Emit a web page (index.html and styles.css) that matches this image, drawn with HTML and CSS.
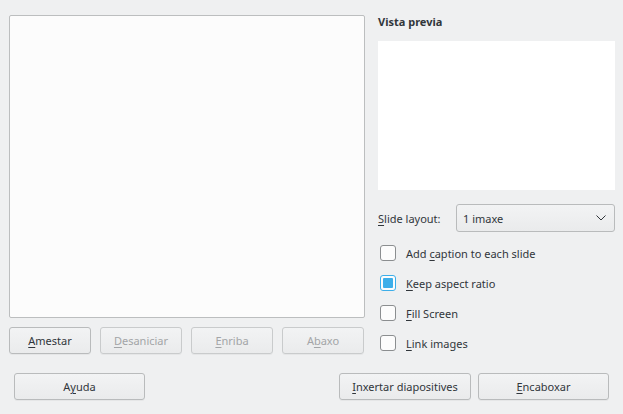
FILE: index.html
```html
<!DOCTYPE html>
<html>
<head>
<meta charset="utf-8">
<link rel="stylesheet" href="styles.css">
</head>
<body>
<div class="dialog">
  <div class="main">
    <div class="left">
      <div class="list"></div>
      <div class="list-buttons">
        <button class="btn small"><u>A</u>mestar</button>
        <button class="btn small disabled"><u>D</u>esaniciar</button>
        <button class="btn small disabled"><u>E</u>nriba</button>
        <button class="btn small disabled">A<u>b</u>axo</button>
      </div>
    </div>
    <div class="right">
      <div class="title">Vista previa</div>
      <div class="preview"></div>
      <div class="layout-row">
        <span class="label"><u>S</u>lide layout:</span>
        <div class="combo">
          <span>1 imaxe</span>
          <svg class="chev" width="10" height="6" viewBox="0 0 10 6"><path d="M0.5 0.5 L5 5 L9.5 0.5" fill="none" stroke="#31363b" stroke-width="1"/></svg>
        </div>
      </div>
      <div class="checks">
        <div class="check"><span class="box"></span><span>Add <u>c</u>aption to each slide</span></div>
        <div class="check"><span class="box on"><span class="fill"></span></span><span><u>K</u>eep aspect ratio</span></div>
        <div class="check"><span class="box"></span><span><u>F</u>ill Screen</span></div>
        <div class="check"><span class="box"></span><span><u>L</u>ink images</span></div>
      </div>
    </div>
  </div>
  <div class="footer">
    <button class="btn wide">A<u>y</u>uda</button>
    <div class="spacer"></div>
    <button class="btn wide"><u>I</u>nxertar diapositives</button>
    <button class="btn wide"><u>E</u>ncaboxar</button>
  </div>
</div>
</body>
</html>
```
FILE: styles.css
```css
html, body {
  margin: 0;
  padding: 0;
  background: #eff0f1;
}
body {
  width: 623px;
  height: 414px;
  overflow: hidden;
  font-family: "Noto Sans", "DejaVu Sans", sans-serif;
  font-size: 11px;
  color: #31363b;
}
u {
  text-decoration: underline;
  text-underline-offset: 2px;
}
.dialog {
  display: flex;
  flex-direction: column;
}
.main {
  display: flex;
  align-items: flex-start;
  height: 339px;
  padding: 15px 0 0 9px;
}
.left {
  width: 356px;
  display: flex;
  flex-direction: column;
}
.list {
  height: 301px;
  background: #fcfcfc;
  border: 1px solid #bcbebf;
  border-radius: 2px;
}
.list-buttons {
  display: flex;
  gap: 9px;
  margin-top: 9px;
}
.btn {
  font-family: inherit;
  font-size: 11px;
  color: #31363b;
  background: linear-gradient(#f2f3f4, #eaebec);
  border: 1px solid #b9bbbc;
  border-radius: 3px;
  padding: 0;
  box-shadow: 0 1px 0 rgba(0,0,0,0.04);
}
.btn.small {
  width: 82px;
  height: 27px;
}
.btn.disabled {
  color: #a3a5a7;
  border-color: #c9cbcc;
}
.right {
  margin-left: 13px;
  width: 237px;
  display: flex;
  flex-direction: column;
}
.title {
  font-weight: bold;
  height: 26px;
  line-height: 14px;
  padding-top: 0px;
}
.preview {
  height: 149px;
  background: #ffffff;
}
.layout-row {
  display: flex;
  align-items: center;
  margin-top: 14px;
}
.label {
  width: 78px;
}
.combo {
  height: 26px;
  border: 1px solid #b9bbbc;
  border-radius: 3px;
  background: linear-gradient(#f2f3f4, #eaebec);
  display: flex;
  align-items: center;
  justify-content: space-between;
  padding: 0 8px 0 6px;
  box-sizing: content-box;
  width: 143px;
}
.chev {
  display: block;
}
.checks {
  display: flex;
  flex-direction: column;
  margin-top: 6px;
}
.check {
  display: flex;
  align-items: center;
  height: 30px;
}
.box {
  width: 14px;
  height: 14px;
  border: 1px solid #8b8e90;
  border-radius: 3px;
  background: #fcfcfc;
  margin-left: 2px;
  margin-right: 10px;
  display: flex;
  align-items: center;
  justify-content: center;
}
.box.on {
  border-color: #3daee9;
}
.fill {
  width: 10px;
  height: 10px;
  background: #3daee9;
  border-radius: 1px;
}
.footer {
  display: flex;
  gap: 7px;
  padding: 19px 14px 0 14px;
}
.btn.wide {
  width: 131px;
  height: 27px;
}
.footer .btn.wide:nth-child(3) {
  width: 132px;
}
.spacer {
  flex: 1;
}
```
